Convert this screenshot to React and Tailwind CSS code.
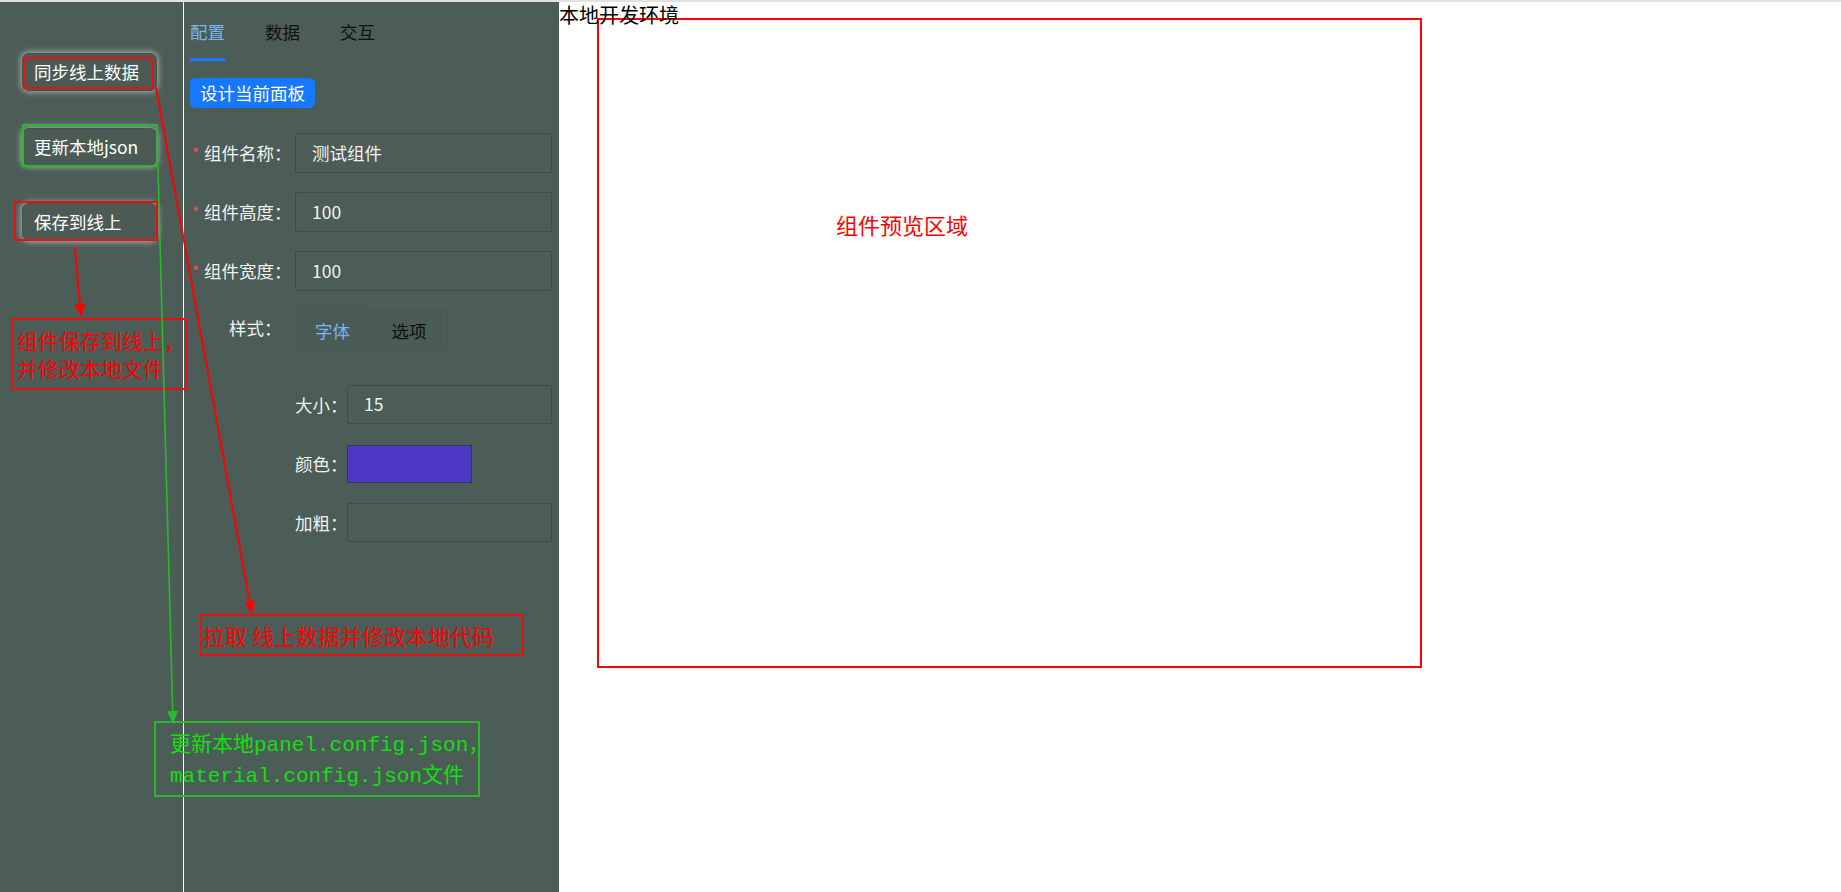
import React from 'react';

const sans = { fontFamily: '"Noto Sans CJK SC", "Noto Sans", sans-serif' };

const SideButton = ({ children }) => (
  <button className="w-[135px] h-[38px] pl-[11px] text-left text-[17.5px] leading-[22px] text-white bg-[#4b5a54] border border-[#44534d] rounded-[7px] shadow-[0_0_6px_1px_rgba(255,255,255,0.55)]">
    {children}
  </button>
);

const FieldRow = ({ label, value }) => (
  <div className="flex items-center h-[40px] mb-[19px]">
    <div className="w-[105px] shrink-0 whitespace-nowrap flex items-center text-[17.5px] leading-[22px] text-[#f2f2f2]">
      <span className="w-[14px] pl-[2px] text-[#ff4d4f] text-[16px] leading-none">*</span>
      <span>{label}：</span>
    </div>
    <div className="w-[257px] h-[40px] border border-[#3d4c46] rounded-[2px] flex items-center pl-[16px] text-[17.5px] text-[#f2f2f2]">
      {value}
    </div>
  </div>
);

const SubRow = ({ label, children }) => (
  <div className="flex items-center h-[39px] mb-[20px]">
    <div className="w-[52px] shrink-0 whitespace-nowrap text-[17.5px] leading-[22px] text-[#f2f2f2]">{label}：</div>
    {children}
  </div>
);

const Arrow = ({ x1, y1, x2, y2, color, width }) => {
  const dx = x2 - x1;
  const dy = y2 - y1;
  const len = Math.sqrt(dx * dx + dy * dy);
  const ux = dx / len;
  const uy = dy / len;
  const bx = x2 - ux * 13;
  const by = y2 - uy * 13;
  const px = -uy * 5.5;
  const py = ux * 5.5;
  return (
    <g>
      <line x1={x1} y1={y1} x2={bx} y2={by} stroke={color} strokeWidth={width} />
      <polygon points={`${x2},${y2} ${bx + px},${by + py} ${bx - px},${by - py}`} fill={color} />
    </g>
  );
};

export default function App() {
  return (
    <div className="relative w-[1841px] h-[892px] overflow-hidden bg-white" style={sans}>
      <div className="h-[2px] bg-[#e2e2e2]" />
      <div className="flex h-[890px]">
        {/* Left panel */}
        <aside className="w-[559px] h-full bg-[#4c5c56] flex">
          <div className="w-[184px] h-full border-r border-white pl-[22px] pt-[51px] flex flex-col gap-[37px]">
            <SideButton>同步线上数据</SideButton>
            <SideButton>更新本地json</SideButton>
            <SideButton>保存到线上</SideButton>
          </div>

          <div className="flex-1 pl-[6px]">
            {/* Tabs */}
            <div className="flex gap-[40px]">
              <div className="flex flex-col">
                <span className="pt-[19px] pb-[15px] text-[17.5px] leading-[22px] text-[#74b6f7]">配置</span>
                <span className="h-[3px] bg-[#1677ff]" />
              </div>
              <div className="flex flex-col">
                <span className="pt-[19px] pb-[15px] text-[17.5px] leading-[22px] text-[#101010]">数据</span>
              </div>
              <div className="flex flex-col">
                <span className="pt-[19px] pb-[15px] text-[17.5px] leading-[22px] text-[#101010]">交互</span>
              </div>
            </div>

            <button className="mt-[17px] h-[30px] px-[10px] rounded-[5px] bg-[#1677ff] text-white text-[17.5px] leading-[22px]">
              设计当前面板
            </button>

            <div className="mt-[25px]">
              <FieldRow label="组件名称" value="测试组件" />
              <FieldRow label="组件高度" value="100" />
              <FieldRow label="组件宽度" value="100" />

              {/* Style tabs */}
              <div className="flex items-center mt-[6px]">
                <div className="w-[105px] shrink-0 whitespace-nowrap pl-[39px] text-[17.5px] leading-[22px] text-[#f2f2f2] -mt-[6px]">样式：</div>
                <div className="flex">
                  <div className="w-[75px] h-[42px] flex items-center justify-center bg-[#4a5a54] border border-[#4a5952] text-[17.5px] text-[#74b6f7]">字体</div>
                  <div className="w-[78px] h-[42px] flex items-center justify-center bg-[#4b5b55] border border-[#4a5952] text-[17.5px] text-[#101010]">选项</div>
                </div>
              </div>

              <div className="pl-[105px] mt-[33px]">
                <SubRow label="大小">
                  <div className="w-[205px] h-[39px] border border-[#3d4c46] rounded-[2px] flex items-center pl-[16px] text-[17.5px] text-[#f2f2f2]">15</div>
                </SubRow>
                <SubRow label="颜色">
                  <div className="w-[125px] h-[38px] bg-[#4f37c8] border border-[#33384a]" />
                </SubRow>
                <SubRow label="加粗">
                  <div className="w-[205px] h-[39px] border border-[#3d4c46] rounded-[2px]" />
                </SubRow>
              </div>
            </div>
          </div>
        </aside>

        {/* Preview */}
        <main className="relative flex-1">
          <div className="absolute left-0 top-[1px] text-[20px] leading-[24px] text-black">本地开发环境</div>
          <div className="ml-[38px] mt-[16px] w-[825px] h-[650px] border-2 border-[#ff0000] pl-[237px] pt-[192px]">
            <span className="text-[22px] leading-[24px] text-[#ff0000]">组件预览区域</span>
          </div>
        </main>
      </div>

      {/* Annotations */}
      <div className="absolute left-[23px] top-[57px] w-[131px] h-[32px] border-2 border-[#e81010]" />
      <div className="absolute left-[22px] top-[124px] w-[136px] h-[43px] border-2 border-[#2cb82c]" />
      <div className="absolute left-[14px] top-[201px] w-[144px] h-[40px] border-2 border-[#e81010]" />

      <div className="absolute left-[11px] top-[318px] w-[176px] h-[72px] border-2 border-[#e81010] pl-[4px] pt-[6px] text-[21px] leading-[28px] text-[#ff0000]">
        组件保存到线上，<br />并修改本地文件
      </div>

      <div className="absolute left-[200px] top-[614px] w-[324px] h-[42px] border-2 border-[#e81010] pl-[1px] flex items-center text-[22px] leading-[26px] text-[#ff0000]">
        拉取 线上数据并修改本地代码
      </div>

      <div
        className="absolute left-[154px] top-[721px] w-[326px] h-[76px] border-2 border-[#2cb82c] pl-[14px] pt-[7px] text-[21px] leading-[31px] text-[#10e010] whitespace-nowrap"
        style={{ fontFamily: '"Liberation Mono", "Noto Sans CJK SC", monospace' }}
      >
        更新本地panel.config.json，<br />material.config.json文件
      </div>

      <svg className="absolute left-0 top-0 pointer-events-none" width="1841" height="892">
        <Arrow x1={156} y1={87} x2={252} y2={614} color="#ff0000" width={2} />
        <Arrow x1={75} y1={247} x2={81} y2={317} color="#ff0000" width={2} />
        <Arrow x1={158} y1={167} x2={173} y2={724} color="#2cb82c" width={1.6} />
      </svg>
    </div>
  );
}
